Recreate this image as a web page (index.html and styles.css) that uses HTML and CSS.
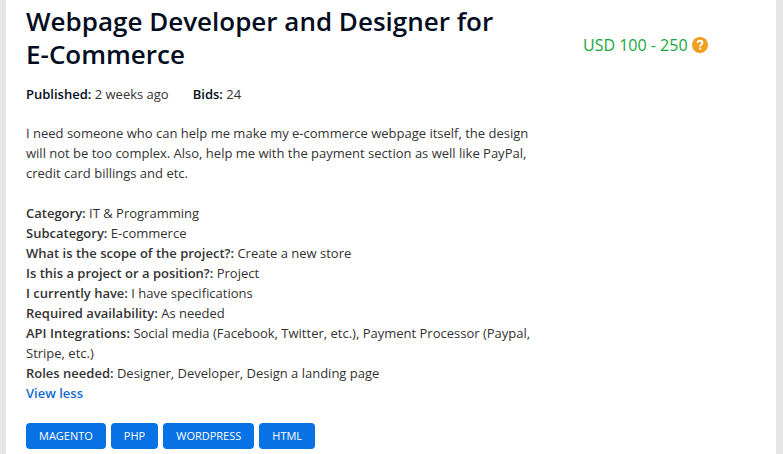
FILE: index.html
```
<!DOCTYPE html>
<html lang="en">
<head>
    <meta charset="UTF-8">
    <meta name="viewport" content="width=device-width, initial-scale=1.0">
    <title>Webpage Developer and Designer for E-Commerce</title>
    <link rel="stylesheet" href="styles.css">
</head>
<body>
    <main class="project">
        <div class="project-main">
            <h1 class="title">Webpage Developer and Designer for <span class="nowrap">E-Commerce</span></h1>

            <div class="meta">
                <span><strong>Published:</strong> 2 weeks ago</span>
                <span><strong>Bids:</strong> 24</span>
            </div>

            <p class="description">I need someone who can help me make my e-commerce webpage itself, the design will not be too complex. Also, help me with the payment section as well like PayPal, credit card billings and etc.</p>

            <ul class="details">
                <li><strong>Category:</strong> IT &amp; Programming</li>
                <li><strong>Subcategory:</strong> E-commerce</li>
                <li><strong>What is the scope of the project?:</strong> Create a new store</li>
                <li><strong>Is this a project or a position?:</strong> Project</li>
                <li><strong>I currently have:</strong> I have specifications</li>
                <li><strong>Required availability:</strong> As needed</li>
                <li><strong>API Integrations:</strong> Social media (Facebook, Twitter, etc.), Payment Processor (Paypal, Stripe, etc.)</li>
                <li><strong>Roles needed:</strong> Designer, Developer, Design a landing page</li>
            </ul>
            <a href="#" class="view-less">View less</a>

            <div class="skills">
                <a href="#" class="skill">MAGENTO</a>
                <a href="#" class="skill">PHP</a>
                <a href="#" class="skill">WORDPRESS</a>
                <a href="#" class="skill">HTML</a>
            </div>
        </div>

        <aside class="budget">
            <span>USD 100 - 250</span>
            <button type="button" class="help" aria-label="About this budget">
                <svg viewBox="0 0 16 16" width="16" height="16" aria-hidden="true">
                    <circle cx="8" cy="8" r="8" fill="#f0a01e"/>
                    <path d="M5.6 6C5.7 4.6 6.6 3.8 8 3.8s2.4.8 2.4 2.1c0 1.7-2.2 1.7-2.2 3.5" fill="none" stroke="#fff" stroke-width="1.9"/>
                    <rect x="7.2" y="10.6" width="2" height="2" fill="#fff"/>
                </svg>
            </button>
        </aside>
    </main>
</body>
</html>
```
FILE: styles.css
```
* {
    box-sizing: border-box;
}

body {
    margin: 0;
    padding: 0 7px 0 6px;
    background-color: #e5e5e5;
    color: #333;
    font-family: "Open Sans", sans-serif;
    font-size: 13px;
    line-height: 20px;
}

.project {
    display: flex;
    min-height: 100vh;
    padding: 5px 20px 4px;
    background-color: #fff;
}

.project-main {
    flex: 0 1 510px;
}

.title {
    margin: 0 0 13px;
    color: #030d21;
    font-size: 26px;
    font-weight: 600;
    line-height: 33px;
}

.nowrap {
    white-space: nowrap;
}

strong {
    font-weight: 600;
}

.meta {
    display: flex;
    gap: 24px;
}

.meta strong {
    color: #030d21;
}

.description {
    margin: 19px 0 20px;
}

.details {
    margin: 0;
    padding: 0;
    list-style: none;
}

.view-less {
    color: #0f6cc9;
    font-weight: 600;
    text-decoration: none;
}

.skills {
    display: flex;
    flex-wrap: wrap;
    gap: 5px;
    margin-top: 20px;
}

.skill {
    padding: 3px 13px;
    border-radius: 4px;
    background-color: #0871e3;
    color: #fff;
    font-size: 11px;
    text-decoration: none;
}

/* Budget */
.budget {
    display: flex;
    flex: 1;
    align-items: center;
    align-self: flex-start;
    gap: 4px;
    margin: 30px 0 0 47px;
    color: #14a83b;
    font-size: 16px;
}

.help {
    display: flex;
    padding: 0;
    border: 0;
    background: none;
    cursor: pointer;
}
```
